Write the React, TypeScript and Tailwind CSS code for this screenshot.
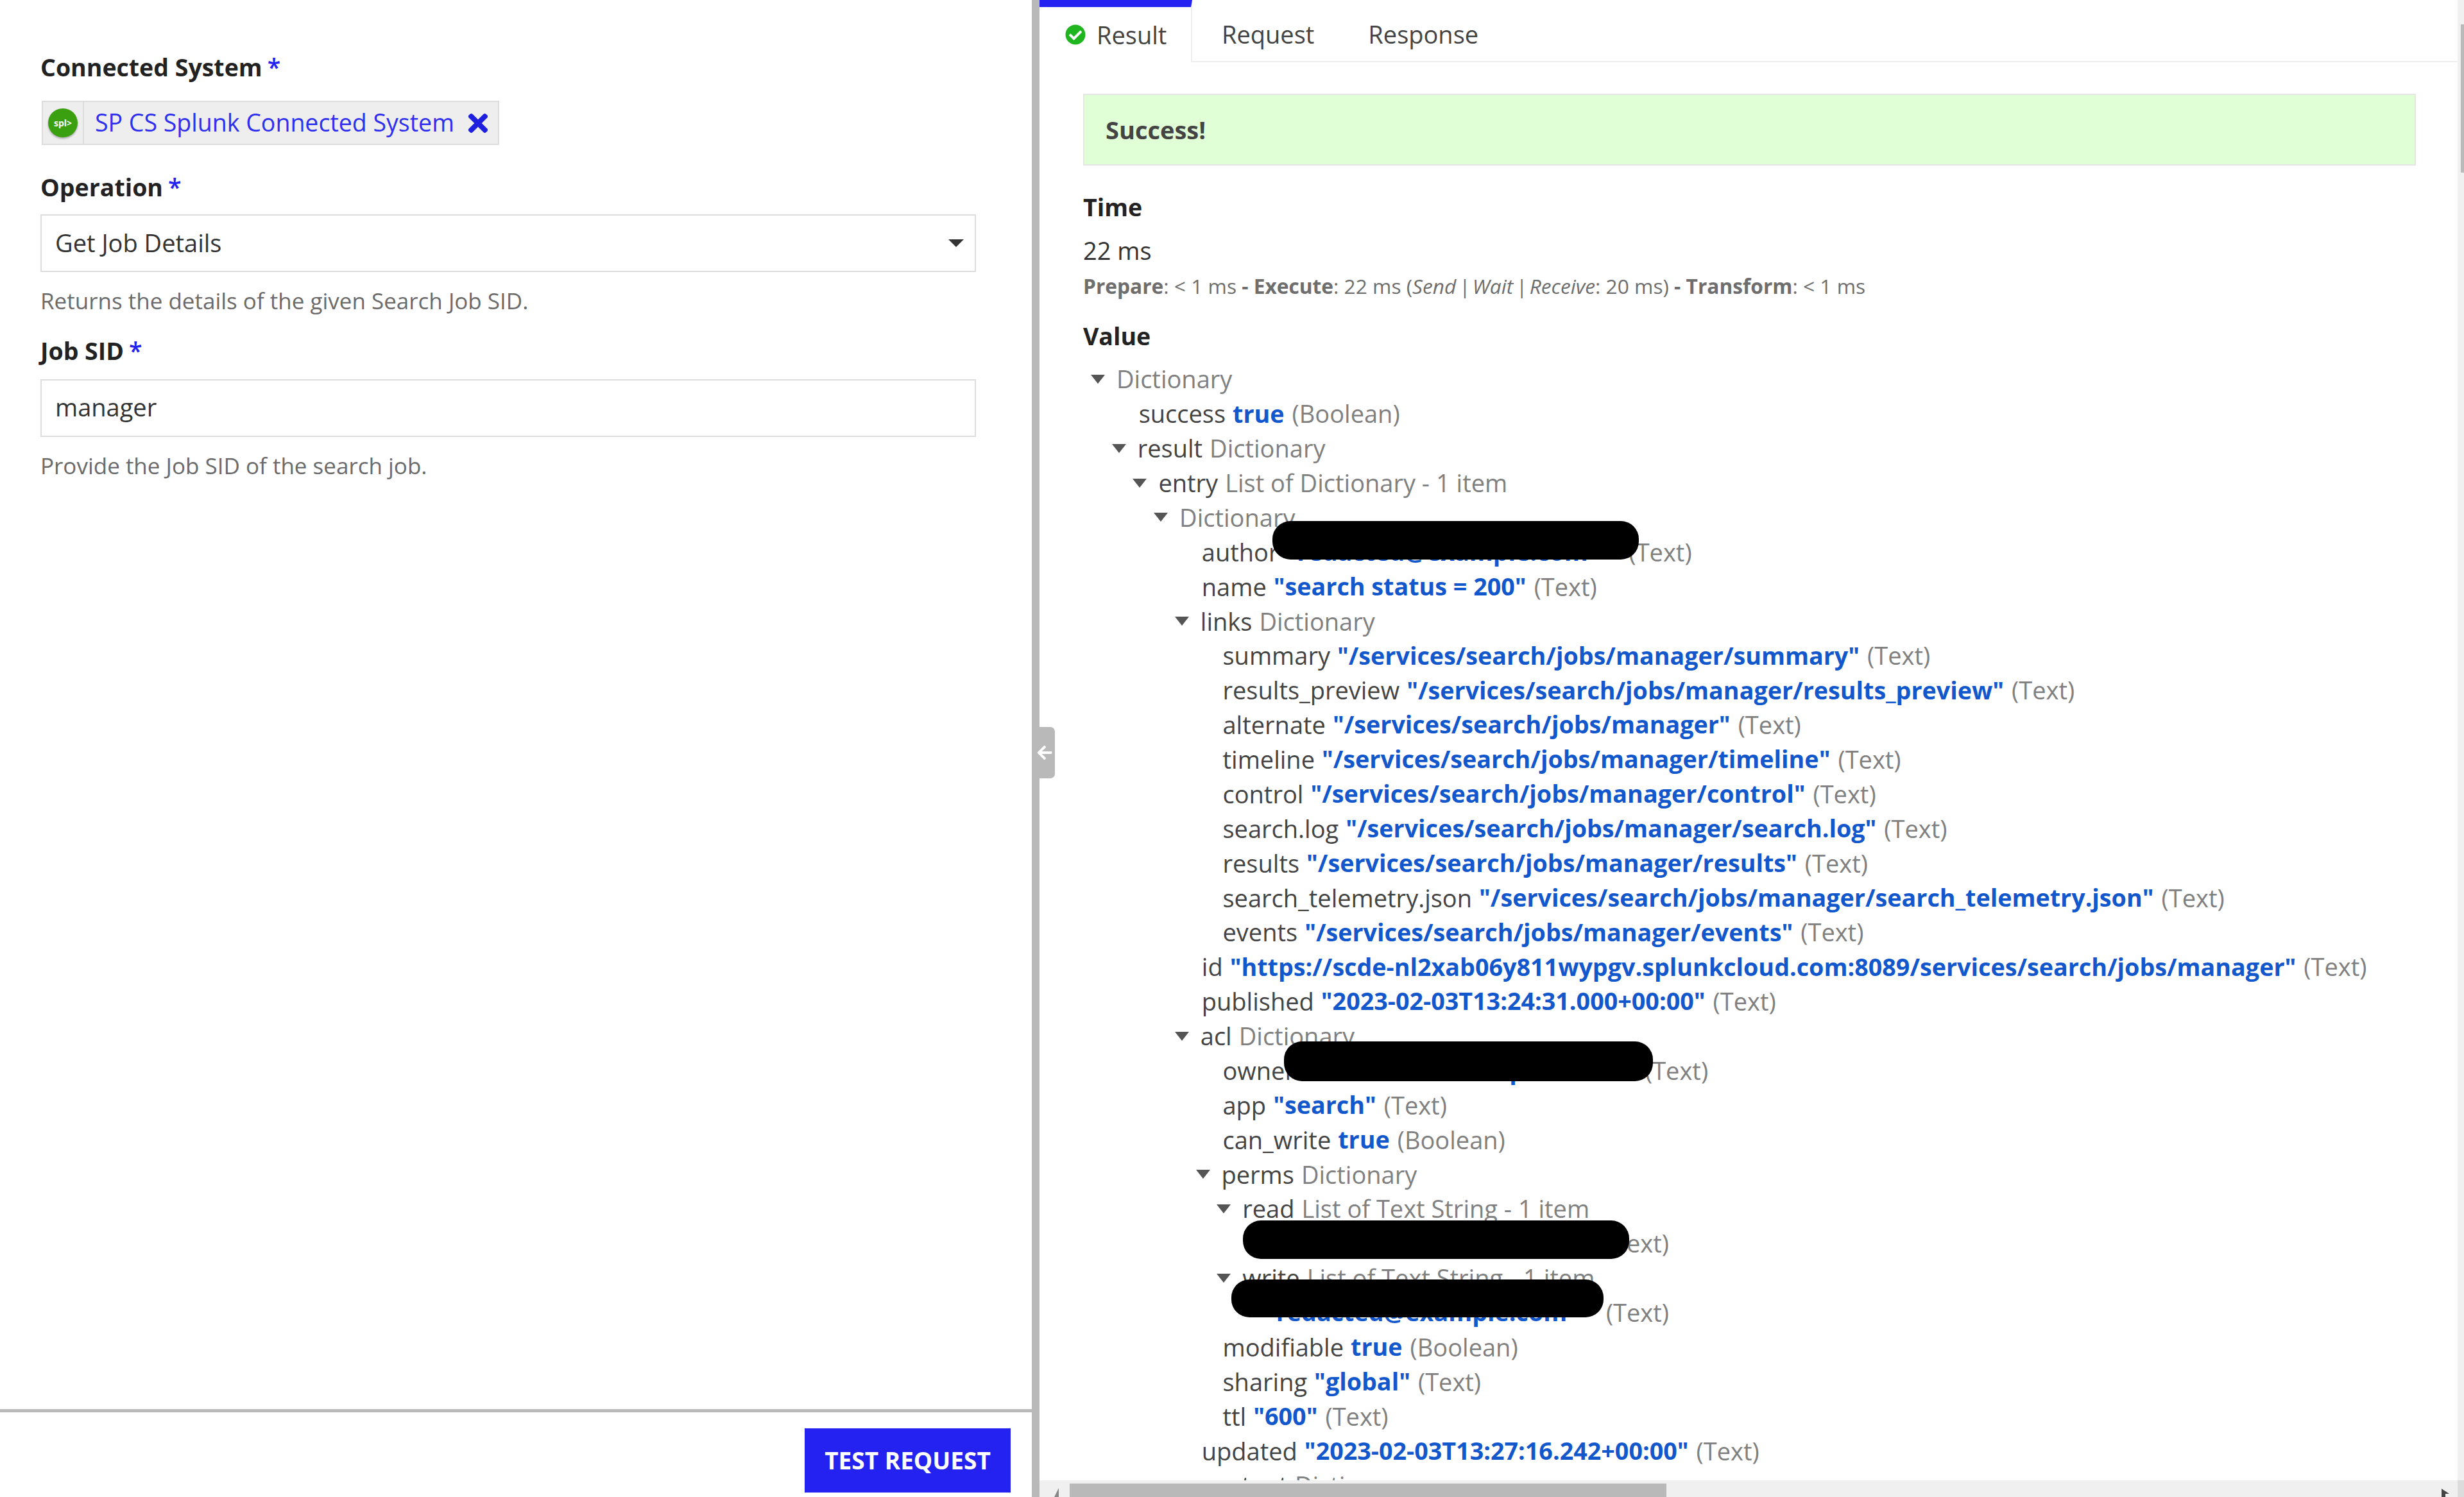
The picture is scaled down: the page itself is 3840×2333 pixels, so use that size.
import { FaArrowLeft, FaCheckCircle, FaTimes } from "react-icons/fa";

type Row = {
  level: number;
  tree?: boolean;
  name?: string;
  value?: string;
  hiddenWidth?: number;
  type?: string;
};

const rows: Row[] = [
  { level: 0, tree: true, type: "Dictionary" },
  { level: 1, name: "success", value: "true", type: "(Boolean)" },
  { level: 1, tree: true, name: "result", type: "Dictionary" },
  { level: 2, tree: true, name: "entry", type: "List of Dictionary - 1 item" },
  { level: 3, tree: true, type: "Dictionary" },
  { level: 4, name: "author", hiddenWidth: 523, type: "(Text)" },
  { level: 4, name: "name", value: '"search status = 200"', type: "(Text)" },
  { level: 4, tree: true, name: "links", type: "Dictionary" },
  { level: 5, name: "summary", value: '"/services/search/jobs/manager/summary"', type: "(Text)" },
  { level: 5, name: "results_preview", value: '"/services/search/jobs/manager/results_preview"', type: "(Text)" },
  { level: 5, name: "alternate", value: '"/services/search/jobs/manager"', type: "(Text)" },
  { level: 5, name: "timeline", value: '"/services/search/jobs/manager/timeline"', type: "(Text)" },
  { level: 5, name: "control", value: '"/services/search/jobs/manager/control"', type: "(Text)" },
  { level: 5, name: "search.log", value: '"/services/search/jobs/manager/search.log"', type: "(Text)" },
  { level: 5, name: "results", value: '"/services/search/jobs/manager/results"', type: "(Text)" },
  { level: 5, name: "search_telemetry.json", value: '"/services/search/jobs/manager/search_telemetry.json"', type: "(Text)" },
  { level: 5, name: "events", value: '"/services/search/jobs/manager/events"', type: "(Text)" },
  { level: 4, name: "id", value: '"https://scde-nl2xab06y811wypgv.splunkcloud.com:8089/services/search/jobs/manager"', type: "(Text)" },
  { level: 4, name: "published", value: '"2023-02-03T13:24:31.000+00:00"', type: "(Text)" },
  { level: 4, tree: true, name: "acl", type: "Dictionary" },
  { level: 5, name: "owner", hiddenWidth: 523, type: "(Text)" },
  { level: 5, name: "app", value: '"search"', type: "(Text)" },
  { level: 5, name: "can_write", value: "true", type: "(Boolean)" },
  { level: 5, tree: true, name: "perms", type: "Dictionary" },
  { level: 6, tree: true, name: "read", type: "List of Text String - 1 item" },
  { level: 7, hiddenWidth: 520, type: "(Text)" },
  { level: 6, tree: true, name: "write", type: "List of Text String - 1 item" },
  { level: 7, hiddenWidth: 520, type: "(Text)" },
  { level: 5, name: "modifiable", value: "true", type: "(Boolean)" },
  { level: 5, name: "sharing", value: '"global"', type: "(Text)" },
  { level: 5, name: "ttl", value: '"600"', type: "(Text)" },
  { level: 4, name: "updated", value: '"2023-02-03T13:27:16.242+00:00"', type: "(Text)" },
  { level: 4, tree: true, name: "content", type: "Dictionary" },
];

const Required = () => <span className="ml-[8px] font-semibold text-[#2322f0]">*</span>;

const FieldLabel = ({ text, className }: { text: string; className: string }) => (
  <div className={`flex h-[50px] items-center text-[37.5px] font-bold text-[#222222] ${className}`}>
    {text}
    <Required />
  </div>
);

const Help = ({ text }: { text: string }) => (
  <div className="mt-[20px] flex h-[50px] items-center text-[35px] text-[#6b6b6b]">{text}</div>
);

const TreeRow = ({ row }: { row: Row }) => (
  <div
    className="flex h-[53.88px] items-center whitespace-nowrap text-[38px]"
    style={{ paddingLeft: 1700 - 1689 + row.level * 32.7 }}
  >
    {row.tree ? (
      <svg className="mr-[17px] w-[24px] shrink-0" height="16" viewBox="0 0 24 16">
        <path d="M1 1h22L12 15z" fill="#555555" />
      </svg>
    ) : (
      <span className="w-[43px] shrink-0" />
    )}
    {row.name && <span className="mr-[11px] text-[#444444]">{row.name}</span>}
    {row.value && <span className="mr-[12px] text-[37.7px] font-bold text-[#1257cc]">{row.value}</span>}
    {row.hiddenWidth && (
      <span className="mr-[12px] inline-block text-[37.7px] font-bold text-[#1257cc]" style={{ width: row.hiddenWidth }}>
        &quot;redacted@example.com&quot;
      </span>
    )}
    <span className="text-[#808080]">{row.type}</span>
  </div>
);

const Pill = ({ className }: { className: string }) => (
  <div className={`absolute rounded-[28px] bg-black ${className}`} />
);

export default function App() {
  return (
    <div className="relative flex h-[2333px] w-[3840px] overflow-hidden bg-white font-['Open_Sans',sans-serif]">
      <div className="flex h-full w-[1608px] flex-col">
        <div className="flex-1 pl-[63px] pr-[87px] pt-[80px]">
          <FieldLabel text="Connected System" className="" />
          <div className="mt-[27px] ml-[2px] flex h-[69px] w-[713px] items-stretch border-2 border-[#dddddd] bg-[#eeeeee]">
            <div className="flex w-[64px] shrink-0 items-center justify-center border-r-2 border-[#dddddd]">
              <div className="flex h-[45px] w-[46px] items-center justify-center rounded-full bg-[#3aa00f] text-[14px] font-bold text-white shadow-[0_2px_3px_rgba(0,0,0,0.3)]">
                spl&gt;
              </div>
            </div>
            <div className="ml-[17px] flex items-center text-[37.5px] text-[#2f2ff0]">SP CS Splunk Connected System</div>
            <FaTimes className="ml-[15px] self-center text-[#1f1fe0]" size={44} />
          </div>
          <FieldLabel text="Operation" className="mt-[41px]" />
          <div className="mt-[17px] flex h-[90px] items-center justify-between border-2 border-[#dcdcdc] pl-[21px] pr-[17px] text-[38px] text-[#333333]">
            <span className="-mt-[2px]">Get Job Details</span>
            <svg width="24" height="12" viewBox="0 0 24 12">
              <path d="M0 0h24L12 12z" fill="#333333" />
            </svg>
          </div>
          <Help text="Returns the details of the given Search Job SID." />
          <FieldLabel text="Job SID" className="mt-[28px]" />
          <div className="mt-[19px] flex h-[90px] items-center border-2 border-[#dcdcdc] pl-[21px] text-[38px] text-[#333333]">
            <span className="-mt-[4px]">manager</span>
          </div>
          <Help text="Provide the Job SID of the search job." />
        </div>
        <div className="flex h-[137px] shrink-0 justify-end border-t-[5px] border-[#b9b9b9] pr-[33px] pt-[25px]">
          <button className="h-[100px] w-[321px] bg-[#2322f0] text-[37px] font-bold text-white">TEST REQUEST</button>
        </div>
      </div>

      <div className="relative w-[12px] shrink-0 bg-[#b9b9b9]">
        <div className="absolute left-[12px] top-[1133px] flex h-[80px] w-[24px] items-center rounded-r-[7px] bg-[#b9b9b9]">
          <FaArrowLeft className="-ml-[5px] text-white" size={26} />
        </div>
      </div>

      <div className="flex h-full min-w-0 flex-1 flex-col">
        <div className="flex min-h-0 flex-1">
          <div className="min-w-0 flex-1 overflow-hidden">
            <div className="flex h-[97px] items-stretch border-b-2 border-[#eeeeee]">
              <div className="-mb-[2px] flex w-[238px] items-center border-r-2 border-t-[11px] border-[#eeeeee] border-t-[#2322f0] bg-white pl-[40px] text-[38px] text-[#444444]">
                <FaCheckCircle className="mr-[17px] text-[#1fb51f]" size={32} />
                Result
              </div>
              <div className="ml-[46px] flex items-center pt-[11px] text-[38px] text-[#444444]">Request</div>
              <div className="ml-[84px] flex items-center pt-[11px] text-[38px] text-[#444444]">Response</div>
            </div>
            <div className="pl-[68px] pr-[65px]">
              <div className="mt-[49px] flex h-[112px] items-center border-2 border-[#e6e6e6] bg-[#e0ffd6] pl-[33px] text-[38px] font-bold text-[#444444]">
                Success!
              </div>
              <div className="mt-[40px] flex h-[50px] items-center text-[37.5px] font-bold text-[#222222]">Time</div>
              <div className="mt-[17px] flex h-[50px] items-center text-[38px] text-[#333333]">22 ms</div>
              <div className="mt-[6px] flex h-[50px] items-center whitespace-pre text-[31.7px] text-[#6e6e6e]">
                <b className="font-bold">Prepare</b>: &lt; 1 ms <b className="font-bold">- Execute</b>: 22 ms (
                <i>Send</i>
                <i className="mx-[4px]">|</i>
                <i>Wait</i>
                <i className="mx-[4px]">|</i>
                <i>Receive</i>: 20 ms) <b className="font-bold">- Transform</b>: &lt; 1 ms
              </div>
              <div className="mt-[28px] flex h-[50px] items-center text-[37.5px] font-bold text-[#222222]">Value</div>
              <div className="mt-[15px]">
                {rows.map((row, i) => (
                  <TreeRow key={i} row={row} />
                ))}
              </div>
            </div>
          </div>
          <div className="w-[10px] shrink-0 bg-[#f0f0f0] pl-[5px] pt-[38px]">
            <div className="h-[231px] bg-[#b9b9b9]" />
          </div>
        </div>
        <div className="flex h-[26px] shrink-0 bg-[#f0f0f0]">
          <div className="flex w-[47px] shrink-0 justify-center pt-[12px]">
            <svg width="12" height="14" viewBox="0 0 12 14">
              <path d="M12 0v14H5z" fill="#888888" />
            </svg>
          </div>
          <div className="mt-[5px] h-[21px] w-[930px] bg-[#b9b9b9]" />
          <div className="flex-1" />
          <div className="mr-[13px] pt-[13px]">
            <svg width="12" height="13" viewBox="0 0 12 13">
              <path d="M0 0l12 8H6v5H0z" fill="#444444" />
            </svg>
          </div>
          <div className="w-[10px] shrink-0 bg-[#dcdcdc]" />
        </div>
      </div>

      <Pill className="left-[1983px] top-[812px] h-[60px] w-[571px]" />
      <Pill className="left-[2001px] top-[1623px] h-[62px] w-[575px]" />
      <Pill className="left-[1937px] top-[1902px] h-[60px] w-[602px]" />
      <Pill className="left-[1919px] top-[1994px] h-[59px] w-[580px]" />
    </div>
  );
}
